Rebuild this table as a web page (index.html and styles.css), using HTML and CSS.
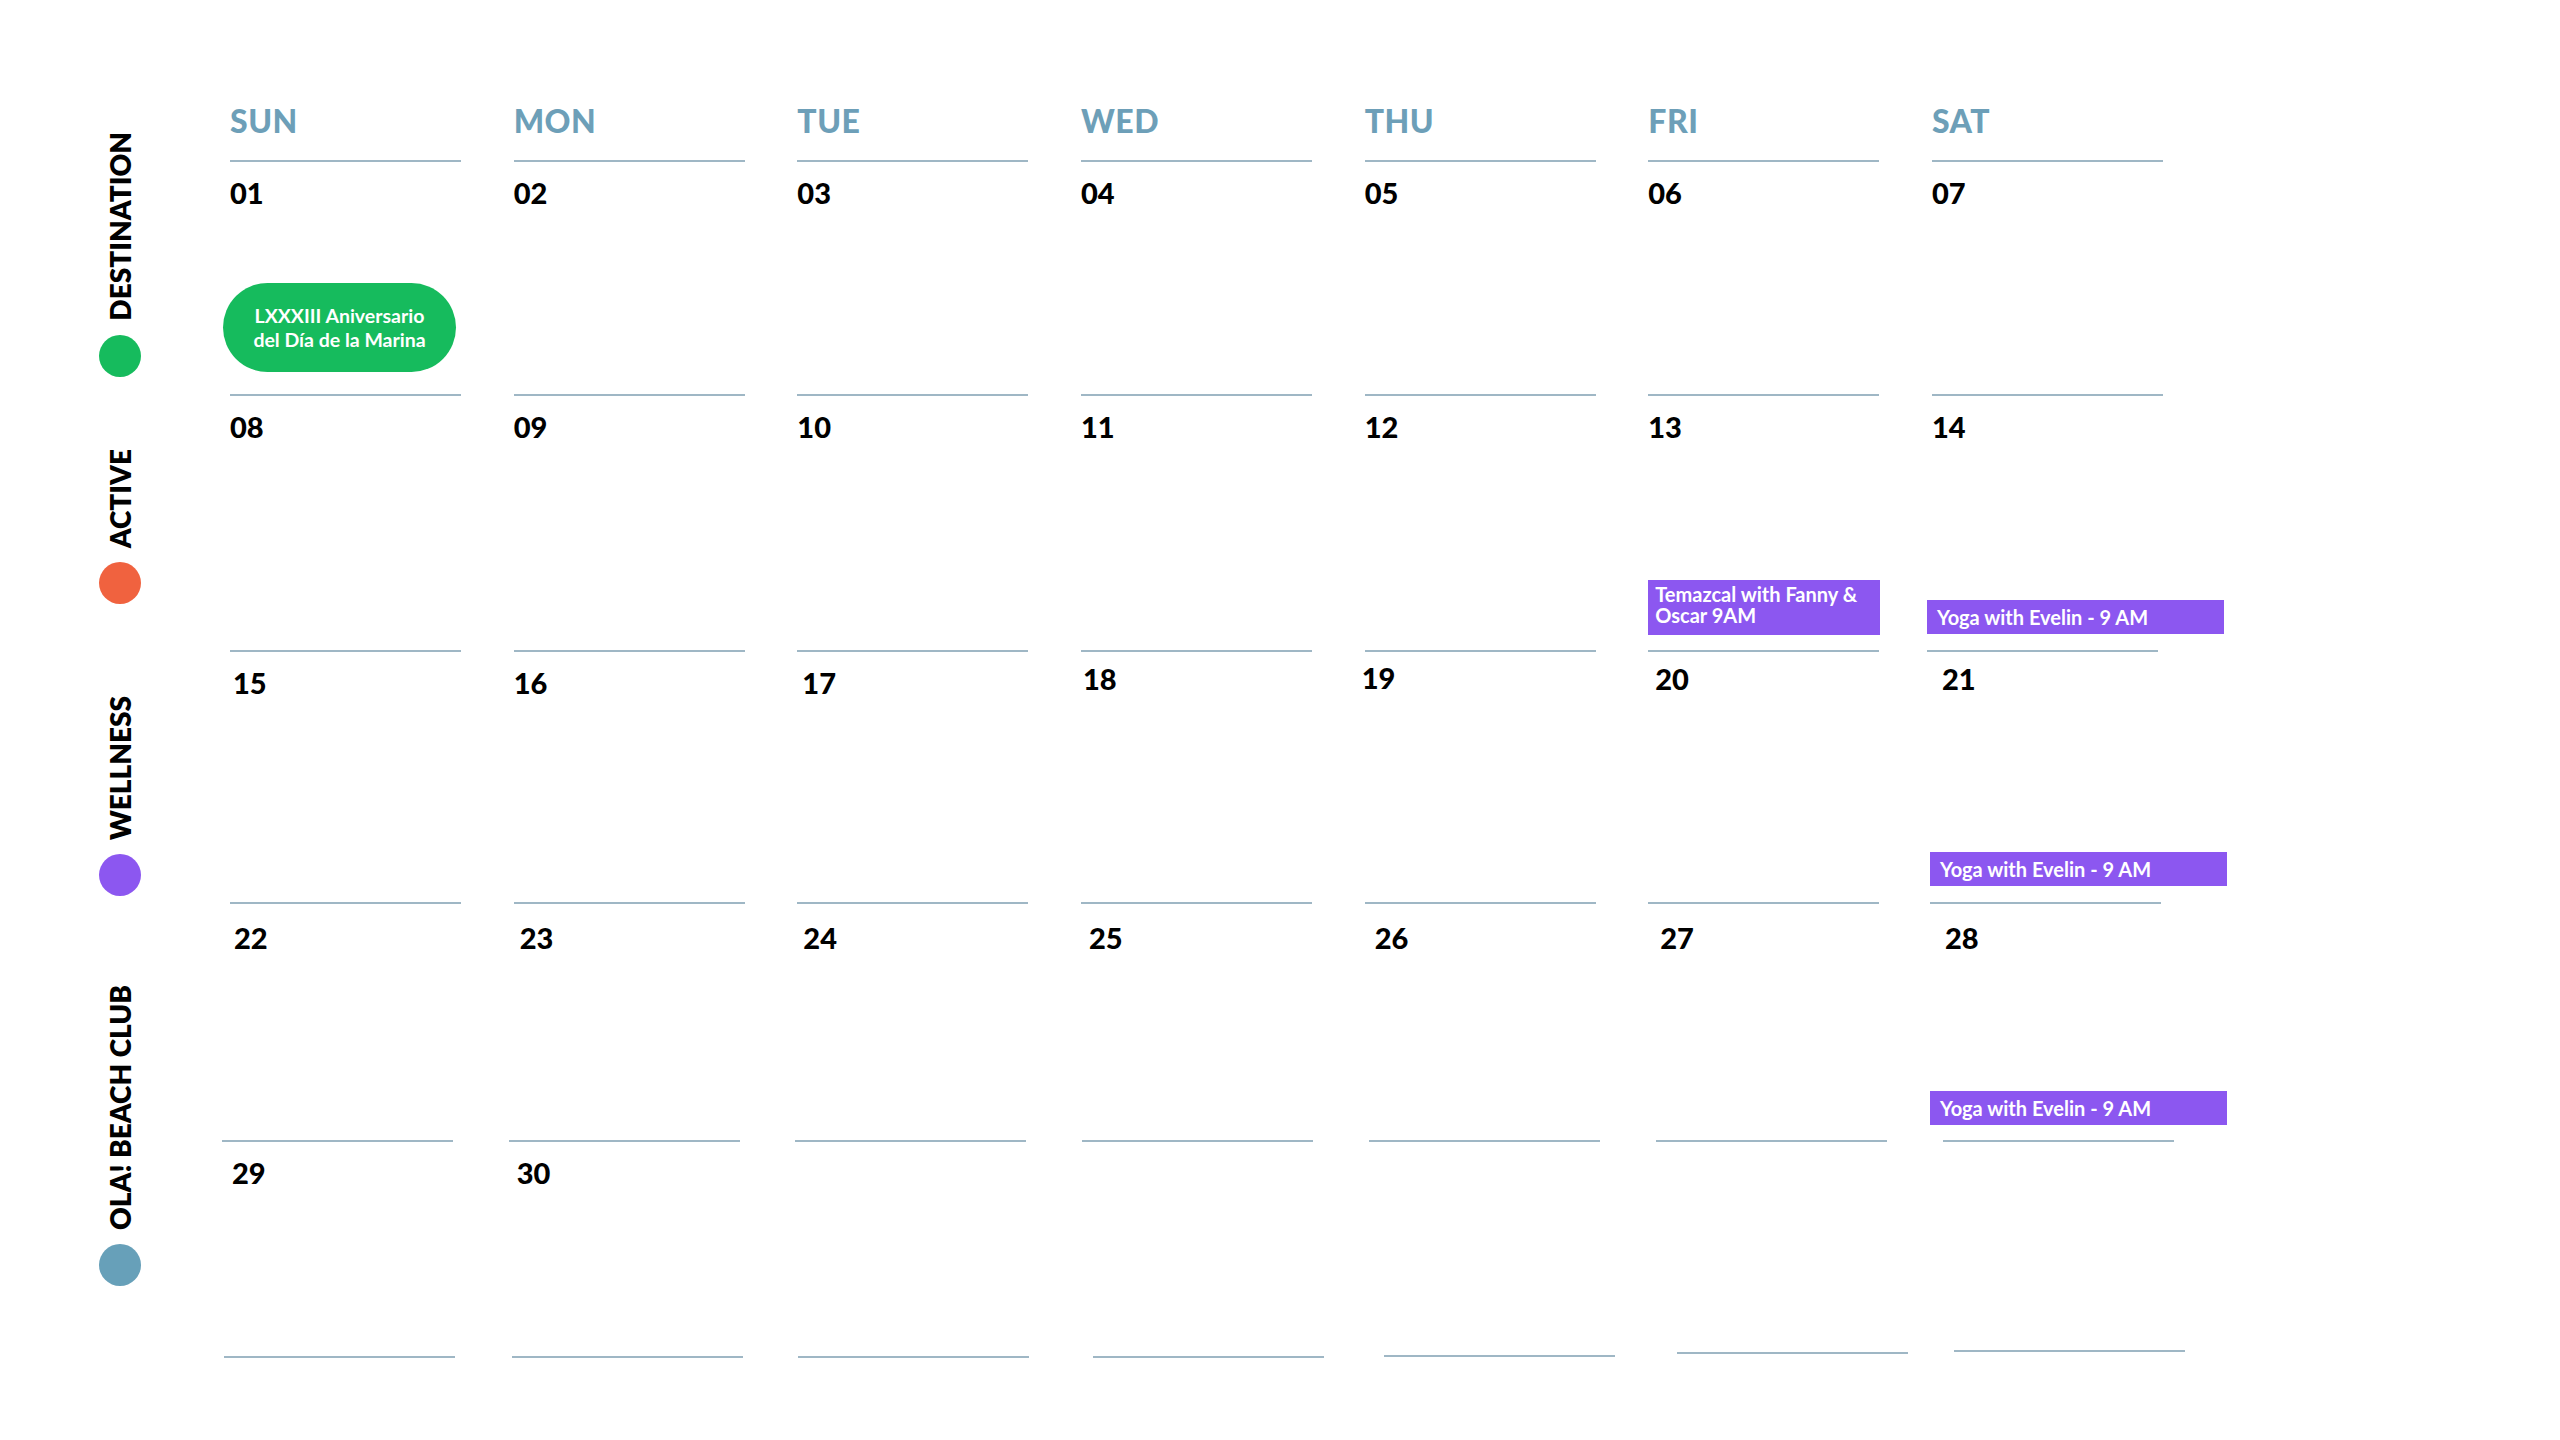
FILE: index.html
```html
<!DOCTYPE html>
<html lang="es">
<head>
<meta charset="utf-8">
<title>Calendario</title>
<link rel="stylesheet" href="styles.css">
</head>
<body>
<main class="page">
  <aside class="legend">
    <div class="legend-item li-1"><span class="legend-label">DESTINATION</span><span class="dot dot-green"></span></div>
    <div class="legend-item li-2"><span class="legend-label">ACTIVE</span><span class="dot dot-orange"></span></div>
    <div class="legend-item li-3"><span class="legend-label">WELLNESS</span><span class="dot dot-purple"></span></div>
    <div class="legend-item li-4"><span class="legend-label">OLA! BEACH CLUB</span><span class="dot dot-blue"></span></div>
  </aside>

  <section class="calendar">
    <div class="row weekdays">
      <div class="weekday"><span class="wd-name">SUN</span><i class="rule"></i></div>
      <div class="weekday"><span class="wd-name">MON</span><i class="rule"></i></div>
      <div class="weekday"><span class="wd-name">TUE</span><i class="rule"></i></div>
      <div class="weekday"><span class="wd-name">WED</span><i class="rule"></i></div>
      <div class="weekday"><span class="wd-name">THU</span><i class="rule"></i></div>
      <div class="weekday"><span class="wd-name">FRI</span><i class="rule"></i></div>
      <div class="weekday"><span class="wd-name">SAT</span><i class="rule"></i></div>
    </div>

    <div class="row week w1">
      <div class="day"><span class="num">01</span><div class="event pill">LXXXIII Aniversario<br>del Día de la Marina</div><i class="rule"></i></div>
      <div class="day"><span class="num">02</span><i class="rule"></i></div>
      <div class="day"><span class="num">03</span><i class="rule"></i></div>
      <div class="day"><span class="num">04</span><i class="rule"></i></div>
      <div class="day"><span class="num">05</span><i class="rule"></i></div>
      <div class="day"><span class="num">06</span><i class="rule"></i></div>
      <div class="day"><span class="num">07</span><i class="rule"></i></div>
    </div>

    <div class="row week w2">
      <div class="day"><span class="num">08</span><i class="rule"></i></div>
      <div class="day"><span class="num">09</span><i class="rule"></i></div>
      <div class="day"><span class="num">10</span><i class="rule"></i></div>
      <div class="day"><span class="num">11</span><i class="rule"></i></div>
      <div class="day"><span class="num">12</span><i class="rule"></i></div>
      <div class="day"><span class="num">13</span><div class="event tag temazcal">Temazcal with Fanny &amp;<br>Oscar 9AM</div><i class="rule"></i></div>
      <div class="day"><span class="num">14</span><div class="event tag yoga">Yoga with Evelin - 9 AM</div><i class="rule"></i></div>
    </div>

    <div class="row week w3">
      <div class="day"><span class="num">15</span><i class="rule"></i></div>
      <div class="day"><span class="num">16</span><i class="rule"></i></div>
      <div class="day"><span class="num">17</span><i class="rule"></i></div>
      <div class="day"><span class="num">18</span><i class="rule"></i></div>
      <div class="day"><span class="num">19</span><i class="rule"></i></div>
      <div class="day"><span class="num">20</span><i class="rule"></i></div>
      <div class="day"><span class="num">21</span><div class="event tag yoga">Yoga with Evelin - 9 AM</div><i class="rule"></i></div>
    </div>

    <div class="row week w4">
      <div class="day"><span class="num">22</span><i class="rule"></i></div>
      <div class="day"><span class="num">23</span><i class="rule"></i></div>
      <div class="day"><span class="num">24</span><i class="rule"></i></div>
      <div class="day"><span class="num">25</span><i class="rule"></i></div>
      <div class="day"><span class="num">26</span><i class="rule"></i></div>
      <div class="day"><span class="num">27</span><i class="rule"></i></div>
      <div class="day"><span class="num">28</span><div class="event tag yoga">Yoga with Evelin - 9 AM</div><i class="rule"></i></div>
    </div>

    <div class="row week w5">
      <div class="day"><span class="num">29</span><i class="rule"></i></div>
      <div class="day"><span class="num">30</span><i class="rule"></i></div>
      <div class="day"><i class="rule"></i></div>
      <div class="day"><i class="rule"></i></div>
      <div class="day"><i class="rule"></i></div>
      <div class="day"><i class="rule"></i></div>
      <div class="day"><i class="rule"></i></div>
    </div>
  </section>
</main>
</body>
</html>
```

FILE: styles.css
```css
* { box-sizing: border-box; }

html, body {
  margin: 0;
  padding: 0;
  background: #ffffff;
}

body {
  font-family: "Lato", "Open Sans", "Liberation Sans", sans-serif;
  color: #000;
  width: 2560px;
  height: 1440px;
  overflow: hidden;
}

.page {
  display: flex;
  align-items: flex-start;
}

/* ---------- Legend ---------- */
.legend {
  width: 230px;
  padding-left: 10px;
  display: flex;
  flex-direction: column;
}

.legend-item {
  width: 220px;
  display: flex;
  flex-direction: column;
  align-items: center;
  justify-content: flex-end;
}

.li-1 { height: 377px; }
.li-2 { height: 227px; }
.li-3 { height: 292px; }
.li-4 { height: 390px; }

.legend-label {
  writing-mode: vertical-rl;
  transform: rotate(180deg);
  font-size: 28px;
  font-weight: 800;
  line-height: 1;
  color: #000;
  white-space: nowrap;
}

.dot {
  display: block;
  width: 42px;
  height: 42px;
  border-radius: 50%;
  margin-top: 14px;
}
.dot-green { background: #16bb5d; }
.dot-orange { background: #f0623f; }
.dot-purple { background: #8c57f0; }
.dot-blue { background: #67a0b9; }

/* ---------- Calendar ---------- */
.calendar {
  padding-top: 105px;
}

.row {
  display: grid;
  grid-template-columns: repeat(7, 231px);
  column-gap: 52.67px;
}

.rule {
  display: block;
  width: 231px;
  height: 2px;
  background: #9fb7c5;
  flex: none;
  margin-left: var(--rule-x, 0px);
  margin-bottom: var(--rule-y, 0px);
}

.weekday {
  display: flex;
  flex-direction: column;
}

.wd-name {
  font-size: 32px;
  line-height: 32px;
  font-weight: 900;
  color: #6d9fb8;
  letter-spacing: 0.5px;
}

.weekday .rule {
  margin-top: 23px;
}

.day {
  display: flex;
  flex-direction: column;
  justify-content: flex-end;
  align-items: flex-start;
}

.w1 .day { height: 234px; }
.w2 .day { height: 256px; }
.w3 .day { height: 252px; }
.w4 .day { height: 238px; }
.w5 .day { height: 216px; }

.num {
  font-size: 29px;
  line-height: 29px;
  font-weight: 900;
  color: #000;
  margin-top: calc(16px + var(--num-y, 0px));
  margin-left: var(--num-x, 0px);
  margin-bottom: auto;
}

.w4 .num { --num-y: 3px; }

/* per-cell nudges, week 2 */
.w2 .day:nth-child(7) { --rule-x: -5px; }

/* week 3 */
.w3 .day:nth-child(1) { --num-x: 3px; }
.w3 .day:nth-child(3) { --num-x: 5px; }
.w3 .day:nth-child(4) .num { --num-x: 2px; --num-y: -4px; }
.w3 .day:nth-child(5) .num { --num-x: -3px; --num-y: -5px; }
.w3 .day:nth-child(6) .num { --num-x: 7px; --num-y: -4px; }
.w3 .day:nth-child(7) .num { --num-x: 10px; --num-y: -4px; }
.w3 .day:nth-child(7) { --rule-x: -2px; }

/* week 4 */
.w4 .day:nth-child(1) { --num-x: 4px; --rule-x: -8px; }
.w4 .day:nth-child(2) { --num-x: 6px; --rule-x: -5px; }
.w4 .day:nth-child(3) { --num-x: 6px; --rule-x: -2px; }
.w4 .day:nth-child(4) { --num-x: 8px; --rule-x: 1px; }
.w4 .day:nth-child(5) { --num-x: 10px; --rule-x: 4px; }
.w4 .day:nth-child(6) { --num-x: 12px; --rule-x: 8px; }
.w4 .day:nth-child(7) { --num-x: 13px; --rule-x: 11px; }

/* week 5 */
.w5 .day:nth-child(1) { --num-x: 2px; --rule-x: -6px; }
.w5 .day:nth-child(2) { --num-x: 3px; --rule-x: -2px; }
.w5 .day:nth-child(3) { --rule-x: 1px; }
.w5 .day:nth-child(4) { --rule-x: 12px; }
.w5 .day:nth-child(5) { --rule-x: 19px; --rule-y: 1px; }
.w5 .day:nth-child(6) { --rule-x: 29px; --rule-y: 4px; }
.w5 .day:nth-child(7) { --rule-x: 22px; --rule-y: 6px; }

/* ---------- Events ---------- */
.event {
  flex: none;
  color: #fff;
  font-weight: 700;
  white-space: nowrap;
}

.pill {
  width: 233px;
  height: 89px;
  margin-left: -7px;
  margin-bottom: 22px;
  border-radius: 45px;
  background: #16bb5d;
  font-size: 19.5px;
  line-height: 24px;
  text-align: center;
  display: flex;
  align-items: center;
  justify-content: center;
}

.tag {
  background: #8c57f0;
  font-size: 20px;
}

.temazcal {
  width: 232px;
  height: 55px;
  padding: 4px 7px 0;
  line-height: 21px;
  margin-bottom: 15px;
}

.yoga {
  width: 297px;
  height: 34px;
  line-height: 34px;
  padding-left: 10px;
  margin-left: -2px;
  margin-bottom: 16px;
}

.w2 .yoga { margin-left: -5px; }
.w4 .yoga { margin-bottom: 15px; }
```
